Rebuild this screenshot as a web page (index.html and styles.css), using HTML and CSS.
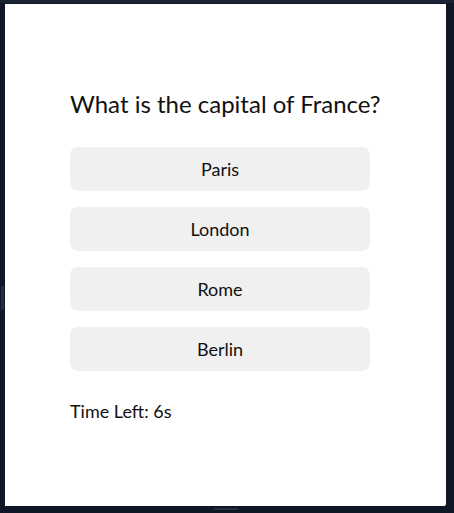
FILE: index.html
```html
<!DOCTYPE html>
<html lang="en">
<head>
<meta charset="utf-8">
<title>Quiz</title>
<link rel="stylesheet" href="styles.css">
</head>
<body>
<div class="top-strip"></div>
<main class="card">
  <h2 class="question">What is the capital of France?</h2>
  <div class="options">
    <button class="option">Paris</button>
    <button class="option">London</button>
    <button class="option">Rome</button>
    <button class="option">Berlin</button>
  </div>
  <p class="timer">Time Left: 6s</p>
</main>
<div class="handle handle-left"></div>
<div class="handle handle-bottom"></div>
</body>
</html>
```
FILE: styles.css
```css
html, body {
  margin: 0;
  height: 100%;
}
body {
  background: #0f1626;
  padding: 4px 8px 7px 5px;
  box-sizing: border-box;
  font-family: Lato, "Open Sans", sans-serif;
  color: #111;
  position: relative;
  overflow: hidden;
}
.top-strip {
  position: absolute;
  left: 0;
  right: 0;
  top: 0;
  height: 3px;
  background: #1b2233;
}
.card {
  background: #fff;
  height: 502px;
  box-sizing: border-box;
  padding: 84px 0 0 65px;
  border-radius: 0 0 2px 0;
  display: flex;
  flex-direction: column;
  align-items: flex-start;
}
.question {
  margin: 0;
  font-size: 24px;
  font-weight: 400;
  line-height: 32px;
}
.options {
  margin-top: 27px;
  display: flex;
  flex-direction: column;
  gap: 16px;
}
.option {
  width: 300px;
  height: 44px;
  border: none;
  border-radius: 8px;
  background: #f0f0f0;
  font-family: inherit;
  font-size: 18px;
  color: #111;
  padding: 0;
}
.timer {
  margin: 28px 0 0;
  font-size: 18px;
  line-height: 24px;
}
.handle {
  position: absolute;
  background: #272d40;
  border-radius: 1px;
}
.handle-left {
  left: 1px;
  top: 286px;
  width: 3px;
  height: 24px;
}
.handle-bottom {
  left: 214px;
  top: 508px;
  width: 24px;
  height: 2px;
}
```
